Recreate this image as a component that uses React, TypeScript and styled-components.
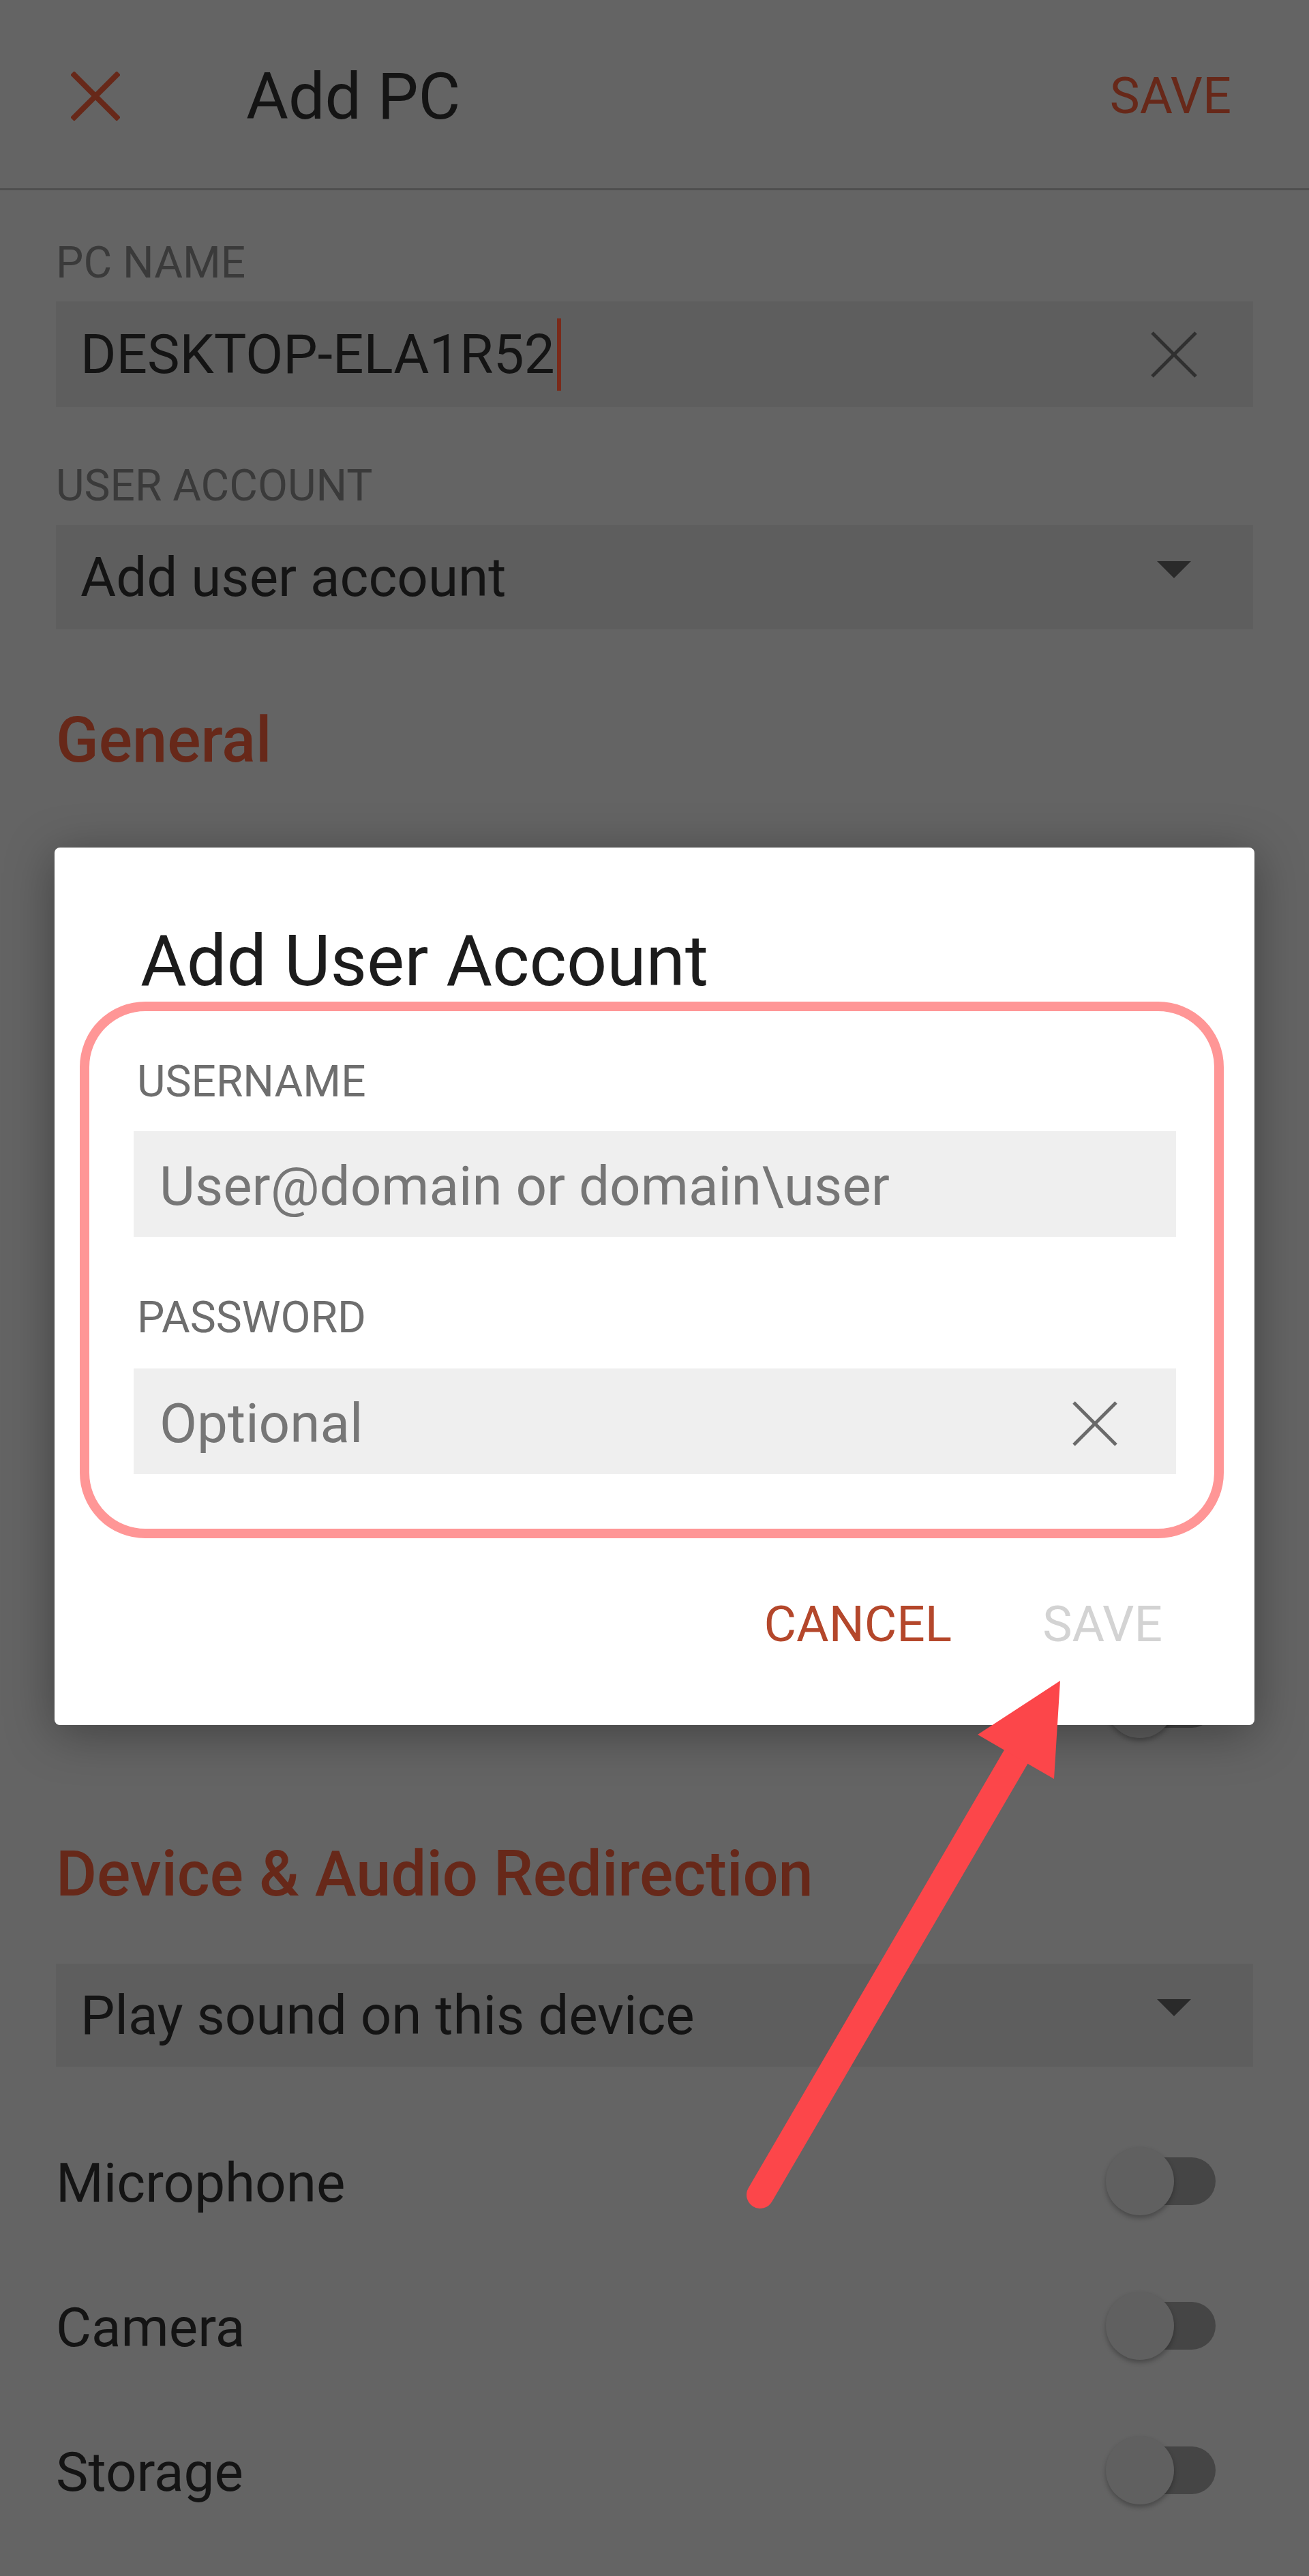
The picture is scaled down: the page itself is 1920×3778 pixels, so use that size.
import styled, { createGlobalStyle } from 'styled-components';

const GlobalStyle = createGlobalStyle`
  html, body {
    margin: 0;
    padding: 0;
    background: #646464;
  }
  body {
    font-family: Roboto, "Noto Sans", sans-serif;
  }
`;

const accent = '#672819';

const Screen = styled.div`
  position: relative;
  width: 1920px;
  height: 3778px;
  overflow: hidden;
  background: #646464;
  font-family: Roboto, "Noto Sans", sans-serif;
`;

const Header = styled.header`
  height: 279px;
  display: flex;
  align-items: center;
  padding: 6px 114px 0 104px;
  box-sizing: border-box;
  border-bottom: 3px solid #4f4f4f;
`;

const HeaderTitle = styled.h1`
  margin: 0 0 0 185px;
  font-size: 95px;
  line-height: 1;
  font-weight: 400;
  color: #141414;
`;

const HeaderAction = styled.span`
  margin-left: auto;
  font-size: 74px;
  line-height: 1;
  color: ${accent};
`;

const Content = styled.div`
  padding: 0 82px;
`;

const FieldLabel = styled.div<{ $top: number }>`
  margin-top: ${(p) => p.$top}px;
  font-size: 64px;
  line-height: 1;
  color: #3a3a3a;
`;

const FieldBox = styled.div<{ $top: number; $height: number }>`
  margin-top: ${(p) => p.$top}px;
  height: ${(p) => p.$height}px;
  background: #5e5e5e;
  display: flex;
  align-items: center;
  justify-content: space-between;
  padding: 0 82px 0 36px;
  box-sizing: border-box;
`;

const FieldText = styled.span`
  display: flex;
  align-items: center;
  font-size: 80px;
  line-height: 1;
  color: #141414;
`;

const Caret = styled.span`
  display: inline-block;
  width: 6px;
  height: 106px;
  margin-left: 3px;
  background: #7a2a1a;
`;

const Triangle = styled.span`
  width: 0;
  height: 0;
  margin-right: 9px;
  margin-top: -22px;
  border-left: 25px solid transparent;
  border-right: 25px solid transparent;
  border-top: 25px solid #2a2a2a;
`;

const SectionTitle = styled.h2<{ $top: number }>`
  margin: ${(p) => p.$top}px 0 0;
  font-size: 92px;
  line-height: 1;
  font-weight: 500;
  color: ${accent};
`;

const RowList = styled.div<{ $top: number }>`
  margin-top: ${(p) => p.$top}px;
  display: flex;
  flex-direction: column;
`;

const Row = styled.div`
  height: 212px;
  display: flex;
  align-items: center;
  justify-content: space-between;
  padding-right: 55px;
`;

const RowLabel = styled.span`
  font-size: 80px;
  line-height: 1;
  color: #141414;
  padding-top: 6px;
`;

const ToggleWrap = styled.span`
  position: relative;
  width: 161px;
  height: 100px;
  margin-left: auto;
`;

const ToggleTrack = styled.span`
  position: absolute;
  left: 50px;
  top: 15px;
  width: 111px;
  height: 70px;
  border-radius: 0 35px 35px 0;
  background: #454545;
`;

const ToggleThumb = styled.span`
  position: absolute;
  left: 0;
  top: 0;
  width: 100px;
  height: 100px;
  border-radius: 50%;
  background: #606060;
  box-shadow: 0 4px 7px rgba(0, 0, 0, 0.28);
`;

const Overlay = styled.div`
  position: absolute;
  inset: 0;
  padding: 1243px 80px 0;
`;

const Dialog = styled.div`
  background: #ffffff;
  border-radius: 8px;
  padding: 115px 0 111px;
  box-shadow: 0 12px 70px rgba(0, 0, 0, 0.35);
`;

const DialogTitle = styled.h3`
  margin: 0;
  padding-left: 126px;
  font-size: 104px;
  line-height: 1;
  font-weight: 400;
  color: #1c1c1c;
`;

const Highlight = styled.div`
  margin: 7px 45px 0 37px;
  border: 14px solid #ff9696;
  border-radius: 96px;
  padding: 72px 56px 80px 65px;
`;

const DialogLabel = styled.div<{ $top: number }>`
  margin-top: ${(p) => p.$top}px;
  padding-left: 5px;
  font-size: 64px;
  line-height: 1;
  color: #6e6e6e;
`;

const DialogInput = styled.div<{ $top: number }>`
  margin-top: ${(p) => p.$top}px;
  height: 155px;
  background: #efefef;
  display: flex;
  align-items: center;
  justify-content: space-between;
  padding: 6px 86px 0 38px;
  box-sizing: border-box;
`;

const Placeholder = styled.span`
  font-size: 80px;
  line-height: 1;
  color: #767676;
`;

const Actions = styled.div`
  margin-top: 90px;
  display: flex;
  justify-content: flex-end;
  gap: 133px;
  padding-right: 135px;
`;

const ActionButton = styled.span<{ $disabled?: boolean }>`
  font-size: 73px;
  line-height: 1;
  color: ${(p) => (p.$disabled ? '#d3d3d3' : '#b4472b')};
`;

const Annotation = styled.svg`
  position: absolute;
  left: 0;
  top: 0;
  pointer-events: none;
`;

function CloseIcon({ size, stroke, color }: { size: number; stroke: number; color: string }) {
  return (
    <svg width={size} height={size} viewBox={`0 0 ${size} ${size}`}>
      <line x1={2} y1={2} x2={size - 2} y2={size - 2} stroke={color} strokeWidth={stroke} />
      <line x1={size - 2} y1={2} x2={2} y2={size - 2} stroke={color} strokeWidth={stroke} />
    </svg>
  );
}

function Toggle() {
  return (
    <ToggleWrap>
      <ToggleTrack />
      <ToggleThumb />
    </ToggleWrap>
  );
}

// rows of the General section sit behind the dialog; only the last switch peeks out
const hiddenRows = ['admin', 'mouse', 'resolution', 'fullscreen', 'fit', 'clipboard'];

const deviceRows = ['Microphone', 'Camera', 'Storage'];

export default function App() {
  return (
    <Screen>
      <GlobalStyle />
      <Header>
        <CloseIcon size={72} stroke={8} color={accent} />
        <HeaderTitle>Add PC</HeaderTitle>
        <HeaderAction>SAVE</HeaderAction>
      </Header>
      <Content>
        <FieldLabel $top={75}>PC NAME</FieldLabel>
        <FieldBox $top={24} $height={155}>
          <FieldText>
            DESKTOP-ELA1R52
            <Caret />
          </FieldText>
          <CloseIcon size={68} stroke={5} color="#303030" />
        </FieldBox>
        <FieldLabel $top={84}>USER ACCOUNT</FieldLabel>
        <FieldBox $top={25} $height={153}>
          <FieldText>Add user account</FieldText>
          <Triangle />
        </FieldBox>

        <SectionTitle $top={117}>General</SectionTitle>
        <RowList $top={201}>
          {hiddenRows.map((key) => (
            <Row key={key}>
              <Toggle />
            </Row>
          ))}
        </RowList>

        <SectionTitle $top={98}>Device &amp; Audio Redirection</SectionTitle>
        <FieldBox $top={85} $height={151}>
          <FieldText>Play sound on this device</FieldText>
          <Triangle />
        </FieldBox>
        <RowList $top={62}>
          {deviceRows.map((label) => (
            <Row key={label}>
              <RowLabel>{label}</RowLabel>
              <Toggle />
            </Row>
          ))}
        </RowList>
      </Content>

      <Overlay>
        <Dialog>
          <DialogTitle>Add User Account</DialogTitle>
          <Highlight>
            <DialogLabel $top={0}>USERNAME</DialogLabel>
            <DialogInput $top={40}>
              <Placeholder>User@domain or domain\user</Placeholder>
            </DialogInput>
            <DialogLabel $top={87}>PASSWORD</DialogLabel>
            <DialogInput $top={42}>
              <Placeholder>Optional</Placeholder>
              <CloseIcon size={66} stroke={5} color="#6a6a6a" />
            </DialogInput>
          </Highlight>
          <Actions>
            <ActionButton>CANCEL</ActionButton>
            <ActionButton $disabled>SAVE</ActionButton>
          </Actions>
        </Dialog>
      </Overlay>

      <Annotation width={1920} height={3778} viewBox="0 0 1920 3778">
        <line x1={1115} y1={3219} x2={1497} y2={2565} stroke="#fc464a" strokeWidth={40} strokeLinecap="round" />
        <polygon points="1555,2465 1434,2544 1546,2609" fill="#fc464a" />
      </Annotation>
    </Screen>
  );
}
